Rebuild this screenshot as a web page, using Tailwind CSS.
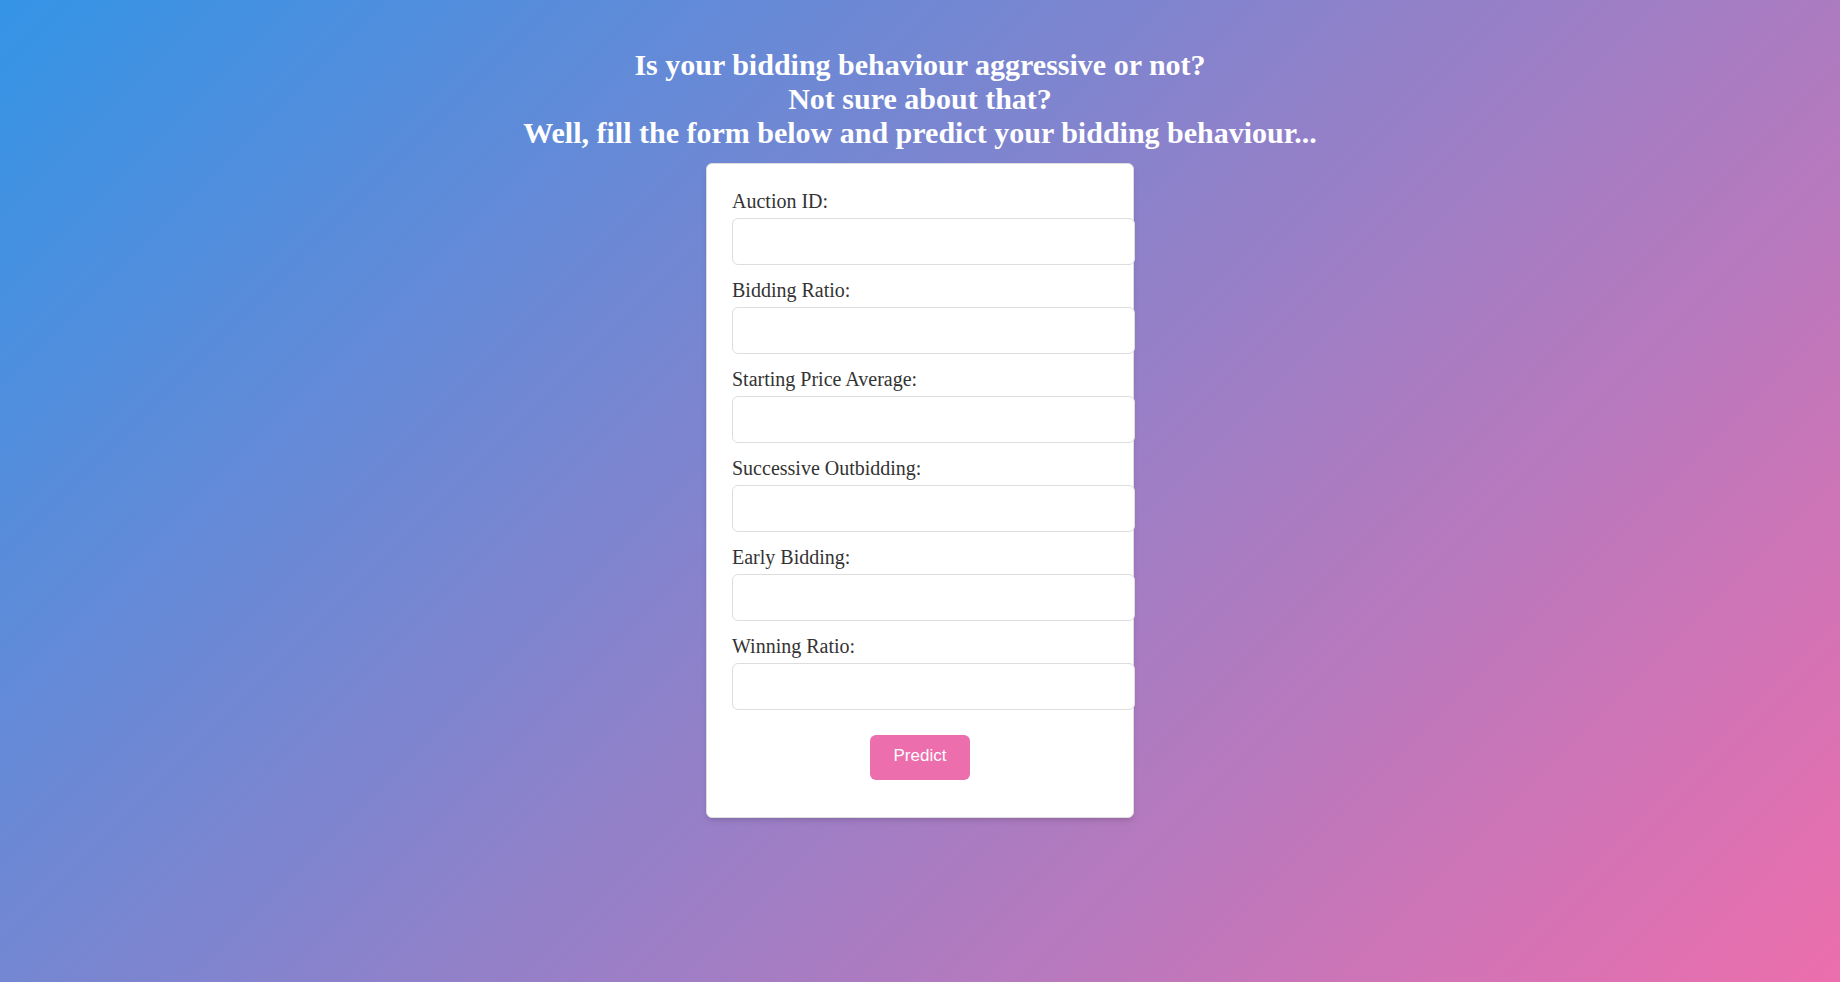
<!DOCTYPE html>
<html lang="en">
<head>
<meta charset="utf-8">
<title>Bidding behaviour prediction</title>
<script src="https://cdn.jsdelivr.net/npm/@tailwindcss/browser@4"></script>
</head>
<body class="min-h-screen bg-[linear-gradient(135deg,#3494e6,#ec6ead)] font-['Liberation_Serif',serif]">
<main class="flex flex-col items-center px-4 pt-12">
<h1 class="text-center text-[30px] leading-[34px] font-bold text-white">Is your bidding behaviour aggressive or not?<br>Not sure about that?<br>Well, fill the form below and predict your bidding behaviour...</h1>
<form class="mt-[13px] w-full max-w-[428px] rounded-md border border-[#ddd] bg-white px-[25px] pt-[25px] pb-[37px] text-[#333] shadow-md">
<div class="flex w-[403px] flex-col gap-[13px] text-[20px] leading-6">
<div><label for="auction" class="mb-[5px] block">Auction ID:</label><input id="auction" type="text" class="block h-[47px] w-full rounded-md border border-[#ddd] bg-white px-3"></div>
<div><label for="bidding" class="mb-[5px] block">Bidding Ratio:</label><input id="bidding" type="text" class="block h-[47px] w-full rounded-md border border-[#ddd] bg-white px-3"></div>
<div><label for="price" class="mb-[5px] block">Starting Price Average:</label><input id="price" type="text" class="block h-[47px] w-full rounded-md border border-[#ddd] bg-white px-3"></div>
<div><label for="outbidding" class="mb-[5px] block">Successive Outbidding:</label><input id="outbidding" type="text" class="block h-[47px] w-full rounded-md border border-[#ddd] bg-white px-3"></div>
<div><label for="early" class="mb-[5px] block">Early Bidding:</label><input id="early" type="text" class="block h-[47px] w-full rounded-md border border-[#ddd] bg-white px-3"></div>
<div><label for="winning" class="mb-[5px] block">Winning Ratio:</label><input id="winning" type="text" class="block h-[47px] w-full rounded-md border border-[#ddd] bg-white px-3"></div>
</div>
<button type="submit" class="mx-auto mt-[25px] block h-[45px] rounded-md bg-[#ec6ead] px-6 pb-[3px] font-['Liberation_Sans',sans-serif] text-[17px] text-white">Predict</button>
</form>
</main>
</body>
</html>
